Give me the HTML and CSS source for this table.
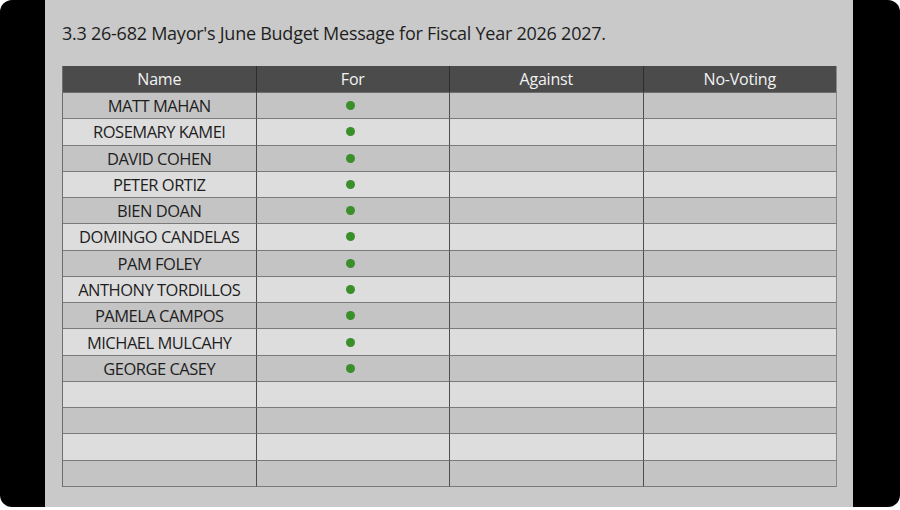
FILE: index.html
```html
<!DOCTYPE html>
<html lang="en">
<head>
<meta charset="utf-8">
<title>Vote Results</title>
<link rel="stylesheet" href="styles.css">
</head>
<body>
<div class="frame">
  <div class="panel">
    <h1 class="title">3.3 26-682 Mayor's June Budget Message for Fiscal Year 2026 2027.</h1>
    <div class="vote-table">
      <div class="head">Name</div><div class="head">For</div><div class="head">Against</div><div class="head last">No-Voting</div>

      <div class="cell dark">MATT MAHAN</div><div class="cell dark"><span class="dot"></span></div><div class="cell dark"></div><div class="cell dark last"></div>
      <div class="cell light">ROSEMARY KAMEI</div><div class="cell light"><span class="dot"></span></div><div class="cell light"></div><div class="cell light last"></div>
      <div class="cell dark">DAVID COHEN</div><div class="cell dark"><span class="dot"></span></div><div class="cell dark"></div><div class="cell dark last"></div>
      <div class="cell light">PETER ORTIZ</div><div class="cell light"><span class="dot"></span></div><div class="cell light"></div><div class="cell light last"></div>
      <div class="cell dark">BIEN DOAN</div><div class="cell dark"><span class="dot"></span></div><div class="cell dark"></div><div class="cell dark last"></div>
      <div class="cell light">DOMINGO CANDELAS</div><div class="cell light"><span class="dot"></span></div><div class="cell light"></div><div class="cell light last"></div>
      <div class="cell dark">PAM FOLEY</div><div class="cell dark"><span class="dot"></span></div><div class="cell dark"></div><div class="cell dark last"></div>
      <div class="cell light">ANTHONY TORDILLOS</div><div class="cell light"><span class="dot"></span></div><div class="cell light"></div><div class="cell light last"></div>
      <div class="cell dark">PAMELA CAMPOS</div><div class="cell dark"><span class="dot"></span></div><div class="cell dark"></div><div class="cell dark last"></div>
      <div class="cell light">MICHAEL MULCAHY</div><div class="cell light"><span class="dot"></span></div><div class="cell light"></div><div class="cell light last"></div>
      <div class="cell dark">GEORGE CASEY</div><div class="cell dark"><span class="dot"></span></div><div class="cell dark"></div><div class="cell dark last"></div>
      <div class="cell light"></div><div class="cell light"></div><div class="cell light"></div><div class="cell light last"></div>
      <div class="cell dark"></div><div class="cell dark"></div><div class="cell dark"></div><div class="cell dark last"></div>
      <div class="cell light"></div><div class="cell light"></div><div class="cell light"></div><div class="cell light last"></div>
      <div class="cell dark"></div><div class="cell dark"></div><div class="cell dark"></div><div class="cell dark last"></div>
    </div>
  </div>
</div>
</body>
</html>
```

FILE: styles.css
```css
html, body {
  margin: 0;
  padding: 0;
  background: #ffffff;
}

.frame {
  width: 900px;
  height: 507px;
  background: #000000;
  border-radius: 12px;
  display: flex;
  padding-left: 45px;
  box-sizing: border-box;
}

.panel {
  width: 808px;
  height: 507px;
  background: #c9c9c9;
  box-sizing: border-box;
  padding: 20px 16px 0 17px;
  display: flex;
  flex-direction: column;
}

.title {
  margin: 0;
  font-family: "Open Sans", "Noto Sans", sans-serif;
  font-weight: 400;
  font-size: 18px;
  line-height: 26px;
  color: #1e1e1e;
  letter-spacing: -0.25px;
}

.vote-table {
  margin-top: 20px;
  width: 775px;
  height: 421px;
  display: grid;
  grid-template-columns: repeat(4, 1fr);
  grid-template-rows: 27px repeat(15, 1fr);
  border-left: 1px solid #6e6e6e;
  box-sizing: border-box;
  font-family: "Open Sans", "Noto Sans", sans-serif;
}

.head {
  background: #4b4b4b;
  color: #f2f2f2;
  font-size: 16px;
  display: flex;
  align-items: center;
  justify-content: center;
  border-right: 1px solid #2e2e2e;
  border-bottom: 1px solid #6e6e6e;
  letter-spacing: -0.2px;
}

.cell {
  color: #1e1e1e;
  font-size: 16.5px;
  display: flex;
  align-items: center;
  justify-content: center;
  border-right: 1px solid #4e4e4e;
  border-bottom: 1px solid #7a7a7a;
  letter-spacing: -0.5px;
  min-height: 0;
}

.head.last, .cell.last {
  border-right: 1px solid #8a8a8a;
}

.dark {
  background: #c4c4c4;
}

.light {
  background: #dddddd;
}

.dot {
  width: 9px;
  height: 9px;
  border-radius: 50%;
  background: #3a8f2b;
  margin-right: 4px;
}
```
